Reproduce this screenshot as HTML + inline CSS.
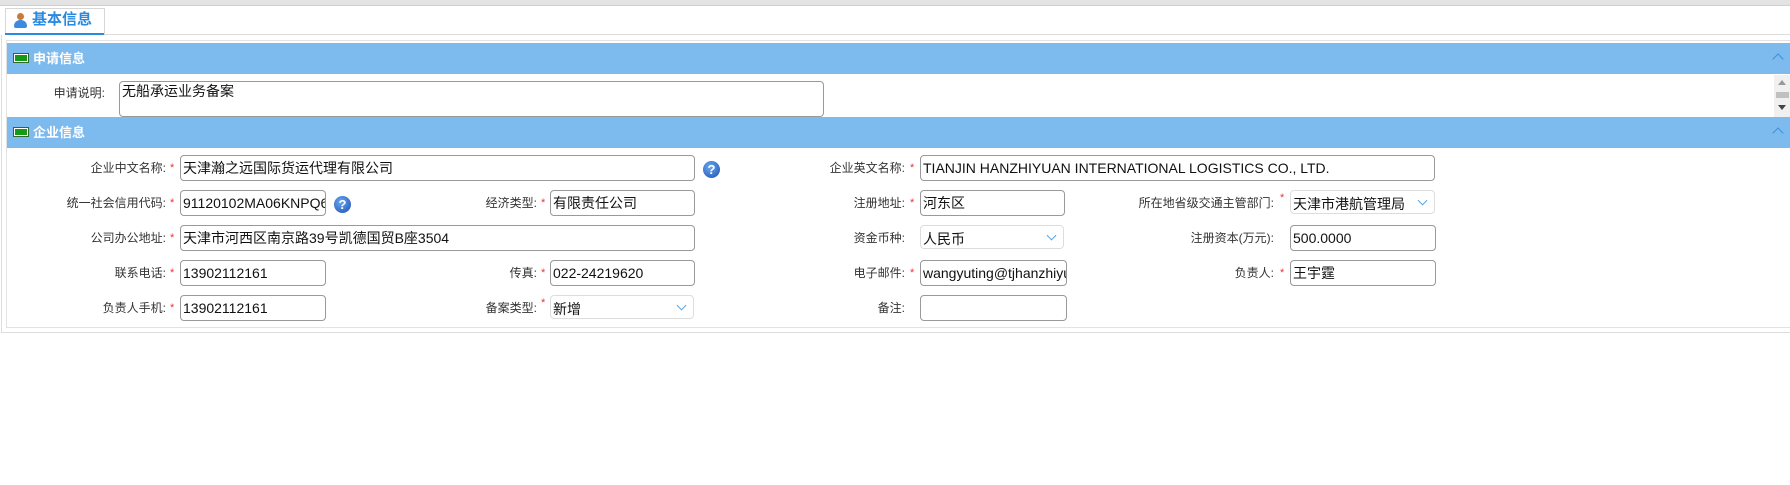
<!DOCTYPE html>
<html><head><meta charset="utf-8"><style>
body{margin:0;width:1790px;height:485px;background:#fff;position:relative;overflow:hidden;font-family:"Liberation Sans","Noto Sans CJK SC",sans-serif;}
.a{position:absolute}
.lbl{position:absolute;font-size:12px;color:#333;text-align:right;width:160px;line-height:26px}
.st{position:absolute;color:#e33;font-size:11px;line-height:22px}
.in{position:absolute;height:26px;border:1px solid #999;border-radius:4px;box-sizing:border-box;font-size:14px;color:#111;line-height:24px;padding-left:2px;white-space:nowrap;overflow:hidden;background:#fff}
.sel{border-color:#ddd}
.sel:after{content:"";position:absolute;right:8px;top:6px;width:6px;height:6px;border-right:1.5px solid #5aa7e6;border-bottom:1.5px solid #5aa7e6;transform:rotate(45deg)}
.hd{position:absolute;left:7px;width:1783px;height:31px;background:#7dbaee;color:#fff;font-weight:bold;font-size:13px;line-height:31px}
.hd .ic{position:absolute;left:6px;top:10px;width:14px;height:8px;border:1px solid #2e6b2e;background:#169a16;box-shadow:inset 0 0 0 1px #fff}
.hd .t{position:absolute;left:26px}
.hd .up{position:absolute;right:8px;top:12px;width:7px;height:7px;border-left:1.5px solid #3f8fd8;border-top:1.5px solid #3f8fd8;transform:rotate(45deg)}
.q{position:absolute;width:17px;height:17px;border-radius:50%;background:radial-gradient(circle at 40% 35%,#6aa8f0,#1a4fb0);color:#fff;font-size:13px;font-weight:bold;text-align:center;line-height:17px}
</style></head><body>
<div class="a" style="left:0;top:0;width:1790px;height:5px;background:#e3e3e3"></div>
<div class="a" style="left:0;top:5px;width:1790px;height:1px;background:#d0d0d0"></div>
<div class="a" style="left:5px;top:8px;width:98px;height:26px;border:1px solid #d6d6d6;border-bottom:none;background:#fff"></div>
<div class="a" style="left:14px;top:13px;width:13px;height:16px"><div class="a" style="left:3px;top:0;width:7px;height:7px;border-radius:50%;background:#c77a3a"></div><div class="a" style="left:0;top:7px;width:13px;height:8px;border-radius:6px 6px 2px 2px;background:#3d8be0"></div></div>
<div class="a" style="left:32px;top:10px;font-size:15px;font-weight:bold;color:#2a8ae0;line-height:20px">基本信息</div>
<div class="a" style="left:5px;top:33px;width:99px;height:2px;background:#2a8ae0"></div>
<div class="a" style="left:104px;top:34px;width:1686px;height:1px;background:#ddd"></div>
<div class="a" style="left:1px;top:35px;width:1788px;height:297px;border:1px solid #ddd;border-top:none"></div>
<div class="a" style="left:6px;top:40px;width:1784px;height:286px;border:1px solid #e2e2e2"></div>

<div class="hd" style="top:43px"><div class="ic"></div><span class="t">申请信息</span><div class="up"></div></div>
<div class="lbl" style="left:-55px;top:80px;width:160px">申请说明:</div>
<div class="in" style="left:119px;top:81px;width:705px;height:36px;line-height:18px;font-size:14px">无船承运业务备案</div>
<div class="a" style="left:1774px;top:75px;width:16px;height:42px;background:#f0f0f0"></div>
<div class="a" style="left:1778px;top:80px;border:4px solid transparent;border-bottom:5px solid #999;border-top:none"></div>
<div class="a" style="left:1776px;top:92px;width:13px;height:6px;background:#c0c0c0"></div>
<div class="a" style="left:1778px;top:105px;border:4px solid transparent;border-top:5px solid #444;border-bottom:none"></div>

<div class="hd" style="top:117px"><div class="ic"></div><span class="t">企业信息</span><div class="up"></div></div>

<!-- col1 -->
<div class="lbl" style="left:6px;top:155px">企业中文名称:</div><div class="st" style="left:170px;top:157px">*</div>
<div class="in" style="left:180px;top:155px;width:515px">天津瀚之远国际货运代理有限公司</div>
<div class="q" style="left:703px;top:161px">?</div>
<div class="lbl" style="left:6px;top:190px">统一社会信用代码:</div><div class="st" style="left:170px;top:192px">*</div>
<div class="in" style="left:180px;top:190px;width:146px">91120102MA06KNPQ6</div>
<div class="q" style="left:334px;top:196px">?</div>
<div class="lbl" style="left:6px;top:225px">公司办公地址:</div><div class="st" style="left:170px;top:227px">*</div>
<div class="in" style="left:180px;top:225px;width:515px">天津市河西区南京路39号凯德国贸B座3504</div>
<div class="lbl" style="left:6px;top:260px">联系电话:</div><div class="st" style="left:170px;top:262px">*</div>
<div class="in" style="left:180px;top:260px;width:146px">13902112161</div>
<div class="lbl" style="left:6px;top:295px">负责人手机:</div><div class="st" style="left:170px;top:297px">*</div>
<div class="in" style="left:180px;top:295px;width:146px">13902112161</div>

<!-- col2 -->
<div class="lbl" style="left:377px;top:190px">经济类型:</div><div class="st" style="left:541px;top:192px">*</div>
<div class="in" style="left:550px;top:190px;width:145px">有限责任公司</div>
<div class="lbl" style="left:377px;top:260px">传真:</div><div class="st" style="left:541px;top:262px">*</div>
<div class="in" style="left:550px;top:260px;width:145px">022-24219620</div>
<div class="lbl" style="left:377px;top:295px">备案类型:</div><div class="st" style="left:541px;top:292px">*</div>
<div class="in sel" style="left:550px;top:295px;width:144px;height:24px;line-height:26px">新增</div>

<!-- col3 -->
<div class="lbl" style="left:745px;top:155px">企业英文名称:</div><div class="st" style="left:910px;top:157px">*</div>
<div class="in" style="left:920px;top:155px;width:515px">TIANJIN HANZHIYUAN INTERNATIONAL LOGISTICS CO., LTD.</div>
<div class="lbl" style="left:745px;top:190px">注册地址:</div><div class="st" style="left:910px;top:192px">*</div>
<div class="in" style="left:920px;top:190px;width:145px">河东区</div>
<div class="lbl" style="left:745px;top:225px">资金币种:</div>
<div class="in sel" style="left:920px;top:225px;width:144px;height:24px;line-height:26px">人民币</div>
<div class="lbl" style="left:745px;top:260px">电子邮件:</div><div class="st" style="left:910px;top:262px">*</div>
<div class="in" style="left:920px;top:260px;width:147px">wangyuting@tjhanzhiyuan.com</div>
<div class="lbl" style="left:745px;top:295px">备注:</div>
<div class="in" style="left:920px;top:295px;width:147px"></div>

<!-- col4 -->
<div class="lbl" style="left:1114px;top:190px">所在地省级交通主管部门:</div><div class="st" style="left:1280px;top:187px">*</div>
<div class="in sel" style="left:1290px;top:190px;width:145px;height:24px;line-height:26px">天津市港航管理局</div>
<div class="lbl" style="left:1114px;top:225px">注册资本(万元):</div>
<div class="in" style="left:1290px;top:225px;width:146px">500.0000</div>
<div class="lbl" style="left:1114px;top:260px">负责人:</div><div class="st" style="left:1280px;top:262px">*</div>
<div class="in" style="left:1290px;top:260px;width:146px">王宇霆</div>
</body></html>
